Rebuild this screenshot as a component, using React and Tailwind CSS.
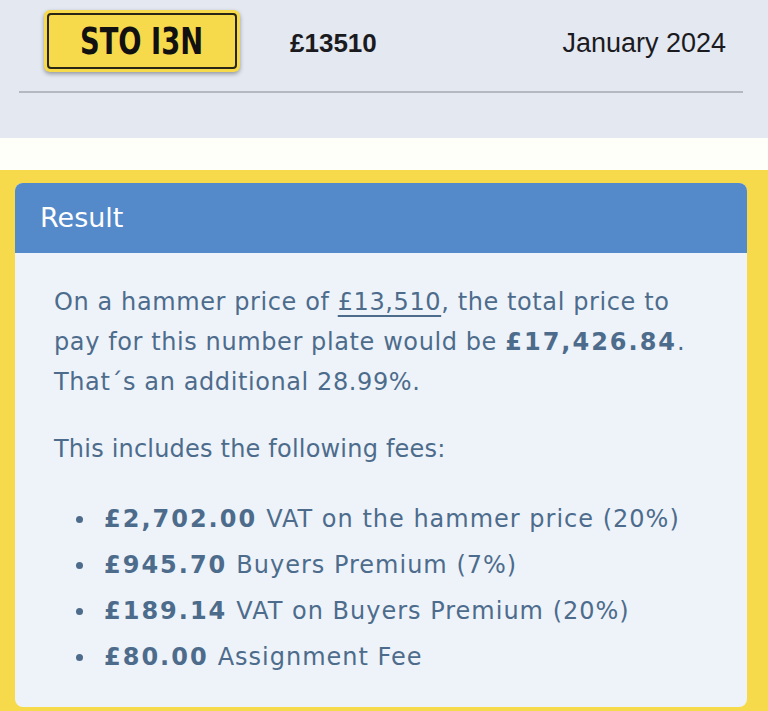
export default function App() {
  const fees = [
    { amount: "£2,702.00", label: "VAT on the hammer price (20%)" },
    { amount: "£945.70", label: "Buyers Premium (7%)" },
    { amount: "£189.14", label: "VAT on Buyers Premium (20%)" },
    { amount: "£80.00", label: "Assignment Fee" },
  ];

  return (
    <div className="w-[768px] h-[711px] overflow-hidden bg-white">
      {/* plate summary */}
      <div className="h-[138px] bg-[#e3e8f1] px-[19px] pt-[10px] [font-family:'Liberation_Sans',Arial,sans-serif]">
        <div className="flex items-center h-[62px]">
          <div className="ml-[25px] w-[196px] h-[62px] rounded-[6px] bg-[#f7d94c] p-[3px] shadow-[0_2px_4px_rgba(0,0,0,0.35)]">
            <div className="h-full rounded-[4px] border-2 border-[#2a2616] flex items-center justify-center overflow-hidden">
              <span className="inline-block scale-x-[0.72] text-[38px] leading-none font-bold text-[#111] whitespace-nowrap [font-family:'DejaVu_Sans',sans-serif]">
                STO I3N
              </span>
            </div>
          </div>
          <div className="ml-[50px] mt-[4px] text-[26px] font-bold text-[#1b1b1f]">£13510</div>
          <div className="ml-auto mr-[23px] mt-[4px] text-[27px] text-[#1b1b1f]">January 2024</div>
        </div>
        <div className="mt-[19px] mr-[6px] h-[2px] bg-[#b3b8c1]"></div>
      </div>

      <div className="h-[32px] bg-[#fffffa]"></div>

      {/* result */}
      <div className="h-[541px] bg-[#f6da4b] pt-[13px] pl-[15px] pr-[21px]">
        <div className="rounded-[8px] overflow-hidden bg-[#eef3fa] h-[524px] [font-family:'DejaVu_Sans',sans-serif]">
          <div className="h-[70px] bg-[#5489ca] flex items-center px-[25px]">
            <span className="text-[27px] text-white">Result</span>
          </div>
          <div className="px-[39px] pt-[29px] text-[#4d6c8c] text-[24px] tracking-[0.6px] whitespace-nowrap">
            <p className="leading-[40px]">
              On a hammer price of <span className="underline underline-offset-[5px] decoration-[1.5px]">£13,510</span>, the total price to
              <br />
              pay for this number plate would be{" "}
              <span className="font-bold tracking-[2px]">£17,426.84</span>.
              <br />
              That´s an additional 28.99%.
            </p>
            <p className="mt-[27px] leading-[40px] tracking-[0.2px]">This includes the following fees:</p>
            <ul className="mt-[27px] pl-[22px]">
              {fees.map((f) => (
                <li key={f.amount} className="flex items-center h-[46px]">
                  <span className="w-[7px] h-[7px] rounded-full bg-[#4d6c8c] mr-[21px]"></span>
                  <span className="font-bold tracking-[2px] mr-[9px]">{f.amount}</span>
                  <span className="tracking-[1px]">{f.label}</span>
                </li>
              ))}
            </ul>
          </div>
        </div>
      </div>
    </div>
  );
}
